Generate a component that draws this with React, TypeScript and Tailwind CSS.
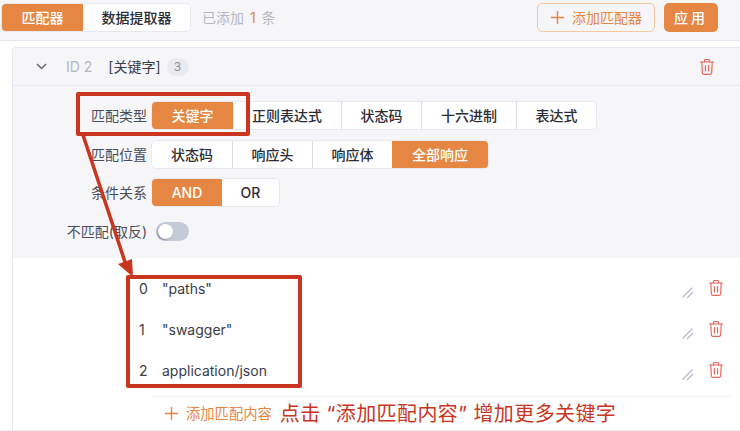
const ORANGE = "bg-[#e58743] text-white";

function Trash() {
  return (
    <svg width="16" height="18" viewBox="0 0 16 18" fill="none" stroke="#e8675c" strokeWidth="1.2" strokeLinecap="round" strokeLinejoin="round">
      <path d="M1.5 4h13" />
      <path d="M5.5 4V2.4c0-.5.4-.9.9-.9h3.2c.5 0 .9.4.9.9V4" />
      <path d="M2.8 4l.5 10.8c0 .9.6 1.5 1.5 1.5h6.4c.9 0 1.5-.6 1.500-1.500L13.200 4" />
      <path d="M6.500 7.500v5.500M9.500 7.500v5.500" />
    </svg>
  );
}

function ResizeHandle() {
  return (
    <svg width="12" height="12" viewBox="0 0 12 12" fill="none" stroke="#b4b7c4" strokeWidth="1.1">
      <path d="M0.500 10.500L10.500 0.500" />
      <path d="M5 11L11 5" />
    </svg>
  );
}

function Plus({ size }: { size: number }) {
  return (
    <svg width={size} height={size} viewBox="0 0 16 16" fill="none" stroke="#e58743" strokeWidth="1.500">
      <path d="M8 1v14M1 8h14" />
    </svg>
  );
}

function Segmented({ items, active, widths }: { items: string[]; active: string; widths: string[] }) {
  return (
    <div className="flex h-[29px] rounded-[5px] border border-[#e8e9f0] bg-white overflow-hidden">
      {items.map((item, i) => (
        <div
          key={item}
          className={`flex items-center justify-center text-[14px] font-medium ${widths[i]} ${
            item === active ? ORANGE : "text-[#2b2d36]"
          } ${i > 0 && item !== active && items[i - 1] !== active ? "border-l border-[#dcdde3]" : ""}`}
        >
          {item}
        </div>
      ))}
    </div>
  );
}

function FormRow({ label, children }: { label: string; children: React.ReactNode }) {
  return (
    <div className="flex items-center h-[29px] gap-[4px]">
      <div className="w-[134px] text-right text-[14px] text-[#4a4c57] whitespace-nowrap">{label}</div>
      {children}
    </div>
  );
}

const words = [
  { id: 0, text: '"paths"' },
  { id: 1, text: '"swagger"' },
  { id: 2, text: "application/json" },
];

export default function App() {
  return (
    <div
      className="relative w-[740px] h-[431px] overflow-hidden bg-white"
      style={{ fontFamily: 'Inter, "Noto Sans CJK SC", sans-serif' }}
    >
      {/* Top toolbar */}
      <div className="flex items-center justify-between h-[41px] pl-px pr-[22px] pb-[8px] pt-[2px] bg-[#f6f6f8] border-b border-[#e8e9f0]">
        <div className="flex items-center gap-[11px]">
          <Segmented items={["匹配器", "数据提取器"]} active="匹配器" widths={["w-[81px]", "w-[107px]"]} />
          <span className="text-[14px] text-[#b4b7c4] whitespace-nowrap">
            已添加 <span className="text-[#e58743] mx-[2px]">1</span> 条
          </span>
        </div>
        <div className="flex items-center gap-[9px]">
          <div className="flex items-center justify-center gap-[7px] w-[118px] h-[29px] rounded-[5px] border border-[#f5c8a0] text-[14px] text-[#e58743]">
            <Plus size={15} />
            添加匹配器
          </div>
          <div className={`flex items-center justify-center w-[54px] h-[29px] rounded-[5px] text-[14px] font-medium tracking-[3px] ${ORANGE}`}>
            应用
          </div>
        </div>
      </div>

      {/* Matcher card */}
      <div className="mt-[6px] ml-3 border-l border-t border-[#e8e9f0] rounded-tl-[4px] h-[384px] flex flex-col">
        <div className="flex items-center h-[38px] shrink-0 bg-[#f6f6f8] border-b border-[#e8e9f0] pr-[25px]">
          <svg className="ml-[23px]" width="11" height="7" viewBox="0 0 11 7" fill="none" stroke="#666a78" strokeWidth="1.500">
            <path d="M1 1l4.500 4.500L10 1" />
          </svg>
          <span className="ml-[19px] text-[14px] text-[#b4b7c4]">ID 2</span>
          <span className="ml-[16px] text-[14px] text-[#3a3c46]">[关键字]</span>
          <span className="ml-[6px] flex items-center justify-center w-[22px] h-[18px] rounded-full bg-[#eaebef] text-[12px] text-[#8a8d9b]">3</span>
          <div className="ml-auto">
            <Trash />
          </div>
        </div>

        <div className="flex flex-col shrink-0 h-[172px] bg-[#f6f6f8] pt-[15px] gap-[9.500px]">
          <FormRow label="匹配类型">
            <Segmented
              items={["关键字", "正则表达式", "状态码", "十六进制", "表达式"]}
              active="关键字"
              widths={["w-[81px]", "w-[108px]", "w-[80px]", "w-[95px]", "w-[80px]"]}
            />
          </FormRow>
          <FormRow label="匹配位置">
            <Segmented
              items={["状态码", "响应头", "响应体", "全部响应"]}
              active="全部响应"
              widths={["w-[80px]", "w-[80px]", "w-[80px]", "w-[96px]"]}
            />
          </FormRow>
          <FormRow label="条件关系">
            <Segmented items={["AND", "OR"]} active="AND" widths={["w-[70px]", "w-[57px]"]} />
          </FormRow>
          <FormRow label="不匹配(取反)">
            <div className="ml-[5px] flex items-center w-[33px] h-[19px] rounded-full bg-[#c5cad8] pl-[2px]">
              <div className="w-[15px] h-[15px] rounded-full bg-white shadow-[-1px_1px_2px_rgba(0,0,0,0.3)]" />
            </div>
          </FormRow>
        </div>

        {/* Keyword list */}
        <div className="flex-1 bg-white pt-[10px] pl-[125px] pr-[16px]">
          {words.map((w) => (
            <div key={w.id} className="flex items-center h-[41px] text-[14px] text-[#3a3c46]">
              <span className="w-[11px] ml-px">{w.id}</span>
              <span className="ml-[12px]">{w.text}</span>
              <div className="ml-auto mt-[9px] mr-[14px]">
                <ResizeHandle />
              </div>
              <div className="mb-[1px]">
                <Trash />
              </div>
            </div>
          ))}
          <div className="flex items-center h-[34px] mt-[5px] ml-[13px] -mr-[7px] pl-[13px] border-t border-[#f2f2f4] whitespace-nowrap">
            <Plus size={15} />
            <span className="ml-[7px] text-[14.300px] text-[#e58743]">添加匹配内容</span>
            <span className="ml-[8px] text-[20px] tracking-[0.4px] text-[#c9351e]">点击 “添加匹配内容” 增加更多关键字</span>
          </div>
        </div>
      </div>
      <div className="absolute left-0 right-0 bottom-0 h-px bg-[#ececf0]" />

      {/* Red annotations over the screenshot */}
      <div className="absolute left-[76px] top-[92px] w-[174px] h-[44px] border-4 border-[#c9351e] rounded-[2px]" />
      <div className="absolute left-[126px] top-[275px] w-[176px] h-[113px] border-4 border-[#c9351e] rounded-[2px]" />
      <svg className="absolute left-0 top-0 pointer-events-none" width="740" height="431" fill="none">
        <path d="M83 135L126 265" stroke="#c9351e" strokeWidth="3.500" />
        <path d="M118 264L132 259L133 277Z" fill="#c9351e" />
      </svg>
    </div>
  );
}
